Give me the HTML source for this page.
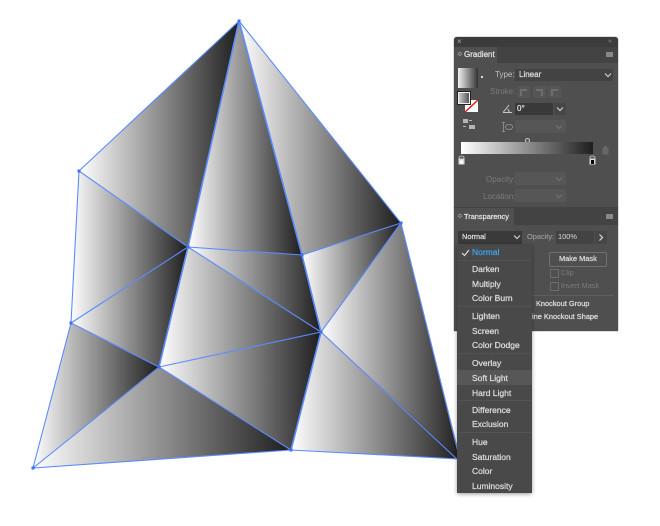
<!DOCTYPE html>
<html><head><meta charset="utf-8"><style>
html,body{margin:0;padding:0;background:#fff}
#r{position:relative;width:660px;height:526px;overflow:hidden;background:#fff;font-family:"Liberation Sans",sans-serif;filter:blur(.3px)}
svg{position:absolute;left:0;top:0}
.a{position:absolute}
.t{position:absolute;white-space:nowrap;font-size:7.4px;line-height:10px;color:#d0d0d0}
.b{-webkit-text-stroke:.25px currentColor}
.d{color:#7b7b7b}
.f{position:absolute;background:#565656;border-radius:1px}
.m{position:absolute;left:472px;white-space:nowrap;font-size:8.5px;line-height:10px;color:#dcdcdc;-webkit-text-stroke:.25px currentColor}
.sep{position:absolute;left:458px;width:74px;height:1px;background:#535353}
</style></head><body><div id="r">
<svg width="660" height="526" viewBox="0 0 660 526">
<defs><linearGradient id="g"><stop offset="0" stop-color="#fff"/><stop offset="1" stop-color="#1e1e1e"/></linearGradient></defs>
<g fill="url(#g)">
<polygon points="239,21 79,171 188,247"/>
<polygon points="239,21 188,247 302,255"/>
<polygon points="239,21 302,255 401,223"/>
<polygon points="79,171 188,247 71,323"/>
<polygon points="188,247 71,323 159,367"/>
<polygon points="188,247 302,255 321,332"/>
<polygon points="188,247 321,332 159,367"/>
<polygon points="302,255 401,223 321,332"/>
<polygon points="401,223 321,332 460,462"/>
<polygon points="71,323 159,367 33,468"/>
<polygon points="159,367 321,332 291,450"/>
<polygon points="159,367 33,468 291,450"/>
<polygon points="321,332 291,450 460,459"/>
</g>
<path fill="none" stroke="#5b8cff" stroke-width="1.1" stroke-linecap="round" d="M239 21L79 171L71 323L33 468L291 450L460 459L401 223L239 21M79 171L188 247L71 323L159 367L33 468M188 247L302 255L401 223L321 332L460 462M188 247L321 332L159 367M321 332L291 450M159 367L291 450"/>
<path fill="none" stroke="#5b8cff" stroke-width="1.6" d="M239 21L188 247L159 367M239 21L302 255L321 332L291 450"/>
<g fill="#3f6ff0">
<rect x="237.5" y="19.5" width="3" height="3"/><rect x="77.5" y="169.5" width="3" height="3"/>
<rect x="186.5" y="245.5" width="3" height="3"/><rect x="300.5" y="253.5" width="3" height="3"/>
<rect x="399.5" y="221.5" width="3" height="3"/><rect x="69.5" y="321.5" width="3" height="3"/>
<rect x="319.5" y="330.5" width="3" height="3"/><rect x="157.5" y="365.5" width="3" height="3"/>
<rect x="31.5" y="466.5" width="3" height="3"/><rect x="289.5" y="448.5" width="3" height="3"/>
</g>
</svg>

<!-- panel -->
<div class="a" style="left:454px;top:37px;width:164px;height:294px;background:#4f4f4f;border-radius:3px 3px 0 0;box-shadow:0 0 1px #222"></div>
<div class="a" style="left:454px;top:37px;width:164px;height:10px;background:#3c3c3c;border-radius:3px 3px 0 0"></div>
<div class="a" style="left:454px;top:47px;width:164px;height:16px;background:#434343"></div>
<div class="a" style="left:454px;top:47px;width:43px;height:16px;background:#505050"></div>
<div class="t" style="left:457px;top:37px;font-size:8px;color:#aaa">×</div>
<div class="t" style="left:608px;top:37px;font-size:7px;color:#888">«</div>
<div class="t" style="left:457px;top:50px;font-size:7px;color:#bbb">≎</div>
<div class="t b" style="left:464px;top:50px;color:#e2e2e2;font-size:8px">Gradient</div>
<div class="a" style="left:606px;top:52px;width:7px;height:5px;background:#888"></div>

<div class="a" style="left:458px;top:68px;width:20px;height:20px;background:linear-gradient(90deg,#f0f0f0,#333)"></div>
<div class="a" style="left:481px;top:76px;width:2px;height:2px;background:#ddd"></div>
<svg class="a" style="left:465px;top:100px;width:13px;height:12px" viewBox="0 0 13 12"><rect width="13" height="12" fill="#fff"/><path d="M0 12L13 0" stroke="#e02020" stroke-width="1.5"/></svg>
<div class="a" style="left:458px;top:92px;width:10px;height:10px;background:linear-gradient(90deg,#ccc,#555);border:1px solid #eee;outline:1px solid #222"></div>
<div class="a" style="left:463px;top:119px;width:5px;height:4px;background:#b5b5b5"></div>
<div class="a" style="left:469px;top:120px;width:3px;height:1px;background:#b5b5b5"></div>
<div class="a" style="left:469px;top:125px;width:6px;height:4px;background:#b5b5b5"></div>
<div class="a" style="left:463px;top:126px;width:3px;height:1px;background:#b5b5b5"></div>

<div class="t" style="left:495px;top:70px;color:#c0c0c0;font-size:8px">Type:</div>
<div class="a" style="left:515px;top:69px;width:98px;height:12px;background:#434343"></div>
<div class="t b" style="left:519px;top:70px;color:#dcdcdc;font-size:8px">Linear</div>
<svg class="a" style="left:604px;top:72px;width:8px;height:6px"><path d="M1 1.5L4 4.5L7 1.5" fill="none" stroke="#ccc" stroke-width="1.2"/></svg>

<div class="t d" style="left:490px;top:87px;font-size:8px">Stroke:</div>
<div class="f" style="left:517px;top:86px;width:13px;height:12px"></div>
<div class="f" style="left:533px;top:86px;width:13px;height:12px"></div>
<div class="f" style="left:548px;top:86px;width:13px;height:12px"></div>
<svg class="a" style="left:517px;top:86px;width:45px;height:12px"><path d="M3 10V3H10V5H5V10ZM19 3H26V10H24V5H19ZM34 10V3H41V5H36V10Z" fill="#6e6e6e"/></svg>

<svg class="a" style="left:502px;top:103px;width:11px;height:11px"><path d="M1 9.5H10M1 9.5L7 2M5.5 6Q7.5 7.5 7 9.5" fill="none" stroke="#c8c8c8" stroke-width="1"/></svg>
<div class="a" style="left:515px;top:103px;width:38px;height:12px;background:#393939"></div>
<div class="t b" style="left:517px;top:104px;color:#ddd;font-size:8px">0°</div>
<div class="a" style="left:554px;top:103px;width:12px;height:12px;background:#464646"></div>
<svg class="a" style="left:556px;top:106px;width:8px;height:6px"><path d="M1 1.5L4 4.5L7 1.5" fill="none" stroke="#ccc" stroke-width="1.2"/></svg>

<svg class="a" style="left:501px;top:121px;width:12px;height:12px"><path d="M1 1.5H4M2.5 1.5V10.5M1 10.5H4" fill="none" stroke="#9a9a9a" stroke-width=".8"/><ellipse cx="8" cy="6" rx="3.6" ry="2.6" fill="none" stroke="#9a9a9a" stroke-width=".8"/></svg>
<div class="f" style="left:515px;top:120px;width:51px;height:13px"></div>
<svg class="a" style="left:555px;top:124px;width:8px;height:6px"><path d="M1 1.5L4 4.5L7 1.5" fill="none" stroke="#707070" stroke-width="1.2"/></svg>

<div class="a" style="left:525px;top:138px;width:3px;height:3px;border:1px solid #ccc;border-radius:50%"></div>
<div class="a" style="left:461px;top:142px;width:132px;height:12px;background:linear-gradient(90deg,#fff,#1e1e1e)"></div>
<svg class="a" style="left:457px;top:155px;width:9px;height:10px"><path d="M2 4V2.5Q2 1 4.5 1Q7 1 7 2.5V4Z" fill="#555" stroke="#ccc" stroke-width=".8"/><rect x="1.5" y="3.5" width="6" height="6" fill="#d8d8d8"/><rect x="3" y="5.5" width="3" height="3" fill="#fff"/></svg>
<svg class="a" style="left:588px;top:155px;width:9px;height:10px"><path d="M2 4V2.5Q2 1 4.5 1Q7 1 7 2.5V4Z" fill="#555" stroke="#ccc" stroke-width=".8"/><rect x="1.5" y="3.5" width="6" height="6" fill="#d8d8d8"/><rect x="3" y="5" width="3" height="4" fill="#000"/></svg>
<svg class="a" style="left:601px;top:145px;width:9px;height:10px"><path d="M1.5 2.5H7.5V9.5H1.5ZM3 1H6V2.5H3Z" fill="#676767"/></svg>

<div class="t d" style="left:486px;top:175px;font-size:8px">Opacity:</div>
<div class="f" style="left:515px;top:172px;width:51px;height:13px"></div>
<div class="t d" style="left:483px;top:192px;font-size:8px">Location:</div>
<div class="f" style="left:515px;top:189px;width:51px;height:13px"></div>
<svg class="a" style="left:555px;top:176px;width:8px;height:24px"><path d="M1 1.5L4 4.5L7 1.5M1 18.5L4 21.5L7 18.5" fill="none" stroke="#707070" stroke-width="1.2"/></svg>

<div class="a" style="left:454px;top:207px;width:164px;height:18px;background:#434343"></div>
<div class="a" style="left:454px;top:208px;width:60px;height:17px;background:#505050"></div>
<div class="t" style="left:457px;top:212px;font-size:7px;color:#bbb">≎</div>
<div class="t b" style="left:464px;top:212px;color:#e2e2e2">Transparency</div>
<div class="a" style="left:606px;top:214px;width:7px;height:5px;background:#888"></div>

<div class="a" style="left:458px;top:231px;width:64px;height:13px;background:#3a3a3a"></div>
<div class="t b" style="left:462px;top:232px;color:#ddd">Normal</div>
<svg class="a" style="left:513px;top:234px;width:8px;height:6px"><path d="M1 1.5L4 4.5L7 1.5" fill="none" stroke="#ccc" stroke-width="1.2"/></svg>
<div class="t" style="left:527px;top:232px;color:#a8a8a8">Opacity:</div>
<div class="a" style="left:556px;top:231px;width:38px;height:13px;background:#434343"></div>
<div class="t" style="left:558px;top:232px;color:#ddd">100%</div>
<div class="a" style="left:595px;top:231px;width:12px;height:13px;background:#464646"></div>
<svg class="a" style="left:597px;top:233px;width:8px;height:9px"><path d="M2.5 1.5L5.5 4.5L2.5 7.5" fill="none" stroke="#ddd" stroke-width="1.2"/></svg>

<div class="a" style="left:549px;top:252px;width:56px;height:13px;border:1px solid #707070;border-radius:2px"></div>
<div class="t b" style="left:559px;top:254px;color:#ddd">Make Mask</div>
<div class="a" style="left:550px;top:269px;width:7px;height:7px;border:1px solid #6c6c6c"></div>
<div class="t d" style="left:561px;top:268px">Clip</div>
<div class="a" style="left:550px;top:282px;width:7px;height:7px;border:1px solid #6c6c6c"></div>
<div class="t d" style="left:561px;top:281px">Invert Mask</div>
<div class="a" style="left:532px;top:295px;width:82px;height:1px;background:#5e5e5e"></div>
<div class="t b" style="left:536px;top:299px;color:#ddd">Knockout Group</div>
<div class="t b" style="left:532px;top:312px;color:#ddd">ine Knockout Shape</div>

<!-- menu -->
<div class="a" style="left:457px;top:245px;width:75px;height:248px;background:#494949;box-shadow:0 1px 4px rgba(0,0,0,.4)"></div>
<div class="a" style="left:457px;top:370px;width:75px;height:15px;background:#575757"></div>
<div class="sep" style="top:260px"></div><div class="sep" style="top:306px"></div><div class="sep" style="top:353px"></div><div class="sep" style="top:400px"></div><div class="sep" style="top:432px"></div>
<svg class="a" style="left:461px;top:249px;width:9px;height:8px"><path d="M1 4L3.5 6.5L8 1" fill="none" stroke="#ddd" stroke-width="1.2"/></svg>
<div class="m" style="top:247px;color:#3ba4ee">Normal</div>
<div class="m" style="top:264px">Darken</div>
<div class="m" style="top:279px">Multiply</div>
<div class="m" style="top:293px">Color Burn</div>
<div class="m" style="top:311px">Lighten</div>
<div class="m" style="top:326px">Screen</div>
<div class="m" style="top:340px">Color Dodge</div>
<div class="m" style="top:358px">Overlay</div>
<div class="m" style="top:373px">Soft Light</div>
<div class="m" style="top:388px">Hard Light</div>
<div class="m" style="top:405px">Difference</div>
<div class="m" style="top:419px">Exclusion</div>
<div class="m" style="top:437px">Hue</div>
<div class="m" style="top:452px">Saturation</div>
<div class="m" style="top:466px">Color</div>
<div class="m" style="top:481px">Luminosity</div>
</div></body></html>
